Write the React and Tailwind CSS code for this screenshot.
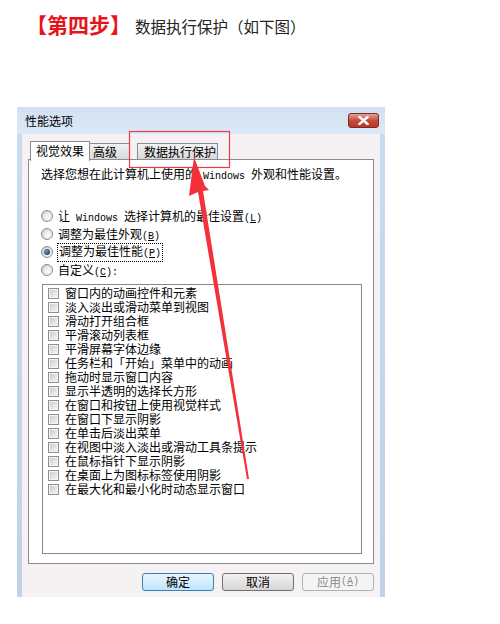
import React from "react";

const ITEMS = [
  "窗口内的动画控件和元素",
  "淡入淡出或滑动菜单到视图",
  "滑动打开组合框",
  "平滑滚动列表框",
  "平滑屏幕字体边缘",
  "任务栏和「开始」菜单中的动画",
  "拖动时显示窗口内容",
  "显示半透明的选择长方形",
  "在窗口和按钮上使用视觉样式",
  "在窗口下显示阴影",
  "在单击后淡出菜单",
  "在视图中淡入淡出或滑动工具条提示",
  "在鼠标指针下显示阴影",
  "在桌面上为图标标签使用阴影",
  "在最大化和最小化时动态显示窗口",
];

const Mono = ({ children }) => (
  <span className="font-['Liberation_Mono',monospace] text-[10px]">{children}</span>
);

const Radio = ({ checked }) => (
  <span className="w-[12px] h-[12px] rounded-full border border-[#8b8b8b] bg-gradient-to-br from-[#cfcfcf] to-[#fbfbfb] flex items-center justify-center shrink-0">
    {checked ? (
      <span className="w-[6px] h-[6px] rounded-full bg-[radial-gradient(circle_at_35%_35%,#7896b8,#0d2642)]" />
    ) : (
      <span className="w-[6px] h-[6px] rounded-full bg-gradient-to-br from-[#e4e4e4] to-white" />
    )}
  </span>
);

const Check = () => (
  <span className="w-[11px] h-[11px] border border-[#8e8f8f] bg-[#f5f5f5] p-[1px] shrink-0">
    <span className="block w-full h-full bg-gradient-to-br from-[#cdcdcd] to-[#f3f3f3]" />
  </span>
);

const Button = ({ children, kind }) => {
  const styles = {
    primary: "border-[#3c7fb1] bg-gradient-to-b from-[#eaf6fd] to-[#bee6fd] text-black",
    normal: "border-[#707070] bg-gradient-to-b from-[#f2f2f2] to-[#d6d6d6] text-black",
    disabled: "border-[#adb2b5] bg-[#f4f4f4] text-[#8a8a8a]",
  };
  return (
    <div className={`w-[72px] h-[18px] rounded-[3px] border flex items-center justify-center text-[12px] leading-none ${styles[kind]}`}>
      {children}
    </div>
  );
};

export default function App() {
  return (
    <div className="relative w-[500px] h-[624px] bg-white overflow-hidden font-['Noto_Sans_CJK_SC',sans-serif] text-black">
      {/* 标题 */}
      <div className="h-[107px] pl-[26px] pt-[12px]">
        <div className="flex items-baseline">
          <span className="text-[21px] leading-[24px] font-bold text-[#e8141c]">【第四步】</span>
          <span className="ml-[4px] text-[15.5px] leading-[24px] text-[#222]">数据执行保护（如下图）</span>
        </div>
      </div>

      {/* 对话框 */}
      <div className="ml-[17px] w-[368px] h-[490px] flex flex-col px-[5px] bg-gradient-to-b from-[#c9dbef] to-[#bfd2ea]">
        <div className="h-[27px] flex items-center justify-between bg-gradient-to-b from-[#d2e1f2] to-[#dce8f5] -mx-[5px] pl-[8px] pr-[6px]">
          <span className="text-[12px] leading-none">性能选项</span>
          <div className="w-[31px] h-[15px] rounded-[3px] border border-[#7a2a25] bg-gradient-to-b from-[#e2a196] via-[#c8493a] to-[#b8382a] flex items-center justify-center">
            <svg width="11" height="9" viewBox="0 0 11 9">
              <path d="M1.5 1 L9.5 8 M9.5 1 L1.5 8" stroke="#fff" strokeWidth="2.4" strokeLinecap="square" />
            </svg>
          </div>
        </div>

        <div className="flex-1 bg-[#f6f2f4] px-[6px] pt-[7px] flex flex-col">
          {/* 选项卡 */}
          <div className="h-[18px] flex items-end pl-[2px] relative z-10">
            <div className="h-[20px] -mb-[2px] px-[5px] bg-white border border-b-0 border-[#898c95] text-[12px] leading-[18px] w-[60px]">视觉效果</div>
            <div className="h-[16px] w-[40px] px-[3px] bg-gradient-to-b from-[#f2f2f2] to-[#d9d9d9] border border-l-0 border-b-0 border-[#898c95] text-[12px] leading-[15px]">高级</div>
            <div className="h-[16px] w-[81px] ml-[7px] pl-[6px] bg-gradient-to-b from-[#f2f2f2] to-[#d9d9d9] border border-b-0 border-[#898c95] text-[12px] leading-[15px]">数据执行保护</div>
          </div>

          {/* 面板 */}
          <div className="h-[405px] bg-white border border-[#898c95] flex flex-col text-[12px]">
            <div className="pl-[12px] pt-[6px] leading-[16px]">
              选择您想在此计算机上使用的<Mono> Windows </Mono>外观和性能设置。
            </div>

            <div className="mt-[22px] pl-[12px] flex flex-col">
              <div className="h-[18px] flex items-center gap-[5px]">
                <Radio />
                <span>让<Mono> Windows </Mono>选择计算机的最佳设置<Mono>(<u>L</u>)</Mono></span>
              </div>
              <div className="h-[18px] flex items-center gap-[5px]">
                <Radio />
                <span>调整为最佳外观<Mono>(<u>B</u>)</Mono></span>
              </div>
              <div className="h-[18px] flex items-center gap-[4px]">
                <Radio checked />
                <span className="border border-dotted border-black px-[1px] leading-[14px]">调整为最佳性能<Mono>(<u>P</u>)</Mono></span>
              </div>
              <div className="h-[18px] flex items-center gap-[5px]">
                <Radio />
                <span>自定义<Mono>(<u>C</u>):</Mono></span>
              </div>
            </div>

            <div className="mt-[5px] ml-[13px] w-[320px] h-[270px] border border-[#828790] pt-[1px] pl-[5px] flex flex-col">
              {ITEMS.map((t) => (
                <div key={t} className="h-[14px] flex items-center gap-[6px] leading-none">
                  <Check />
                  <span className="leading-[14px]">{t}</span>
                </div>
              ))}
            </div>
          </div>

          {/* 按钮 */}
          <div className="mt-[9px] flex justify-end gap-[8px]">
            <Button kind="primary">确定</Button>
            <Button kind="normal">取消</Button>
            <Button kind="disabled">
              应用<Mono>(<u>A</u>)</Mono>
            </Button>
          </div>
        </div>
      </div>

      {/* 红框与红色箭头（标注） */}
      <svg className="absolute z-20 left-0 top-0 pointer-events-none" width="500" height="624" viewBox="0 0 500 624">
        <rect x="129.5" y="131.5" width="100" height="36" fill="none" stroke="#ee3a48" strokeWidth="1.2" />
        <polygon points="194,157 205,186 209,190 203,191 249,479 247,479 198,192 189,196" fill="#f2313a" />
      </svg>
    </div>
  );
}
